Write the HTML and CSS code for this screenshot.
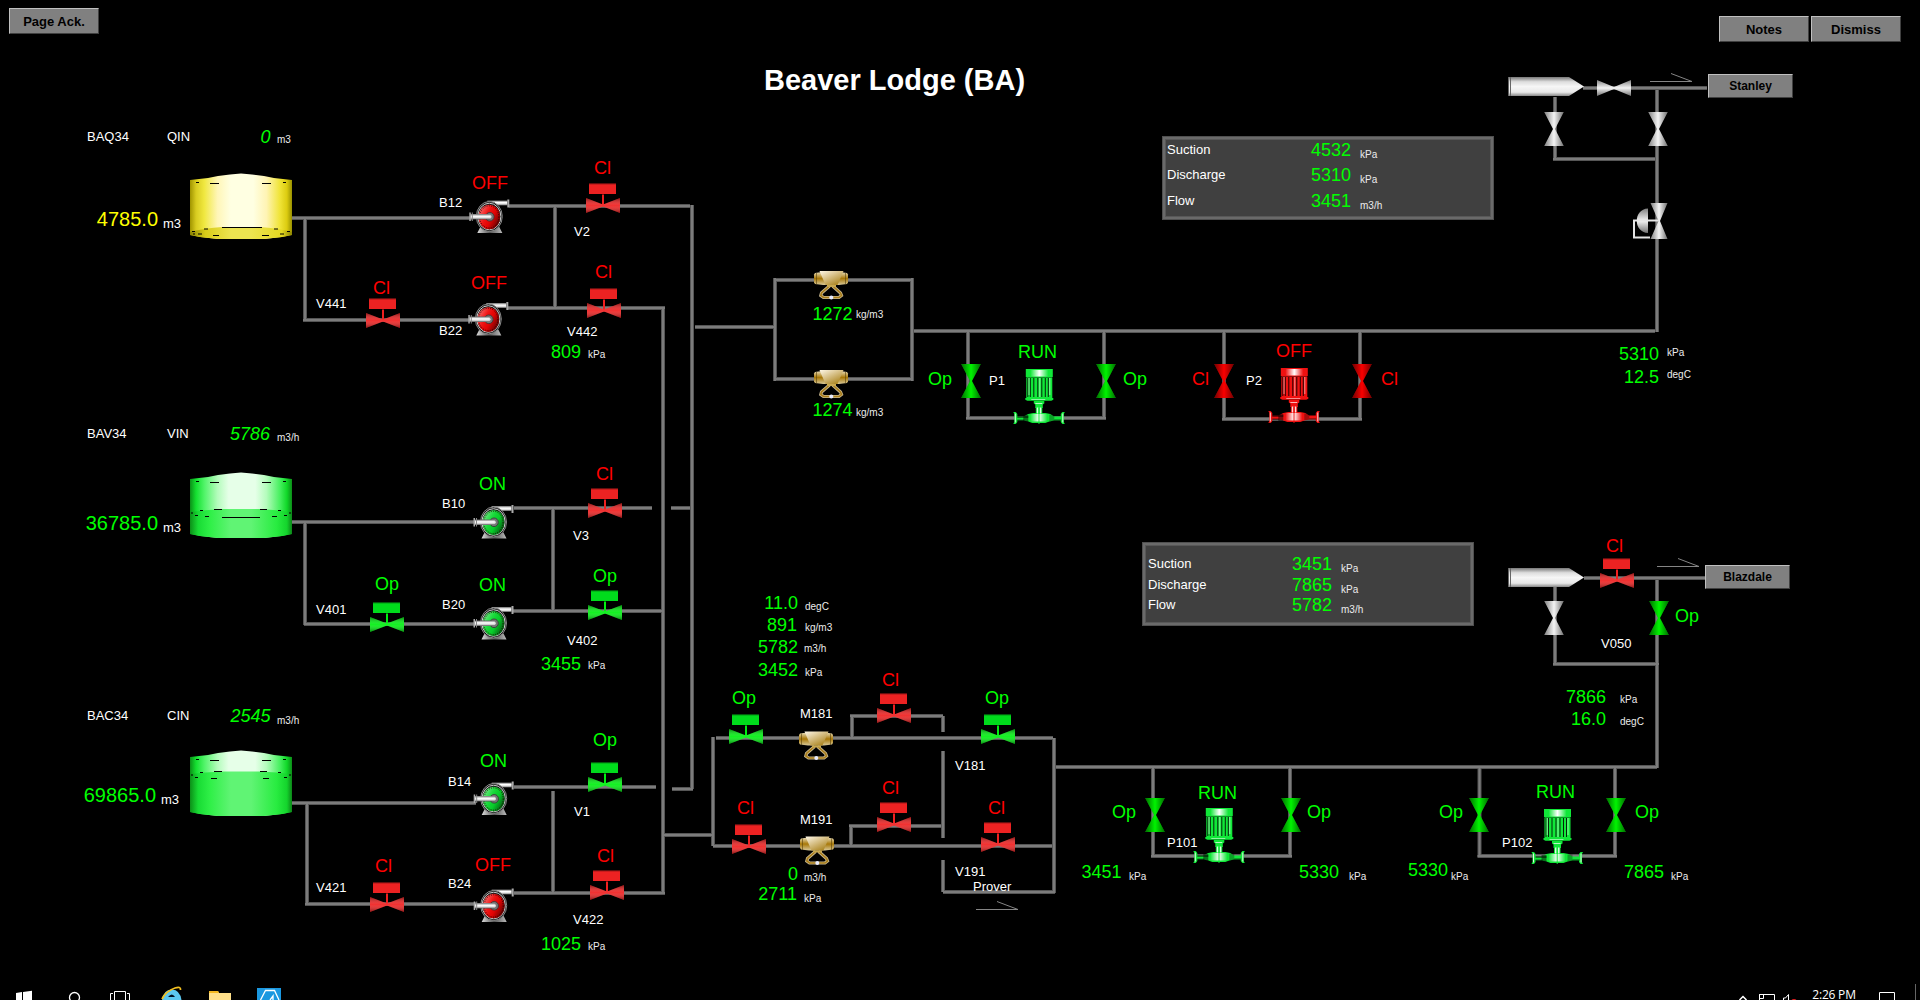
FILE: index.html
```html
<!DOCTYPE html>
<html lang="en">
<head>
<meta charset="utf-8">
<title>Beaver Lodge (BA)</title>
<link rel="stylesheet" href="styles.css">
</head>
<body>
<main class="canvas">
<svg class="diagram" width="1920" height="984" viewBox="0 0 1920 984">
<defs>
  <linearGradient id="steelV" x1="0" y1="0" x2="0" y2="1"><stop offset="0" stop-color="#6a6a6a"/><stop offset=".4" stop-color="#fff"/><stop offset=".7" stop-color="#ddd"/><stop offset="1" stop-color="#555"/></linearGradient>
  <linearGradient id="vesselV" x1="0" y1="0" x2="0" y2="1"><stop offset="0" stop-color="#777"/><stop offset=".25" stop-color="#ddd"/><stop offset=".5" stop-color="#f6f6f6"/><stop offset=".8" stop-color="#e8e8e8"/><stop offset="1" stop-color="#888"/></linearGradient>
  <linearGradient id="base" x1="0" x2="1"><stop offset="0" stop-color="#ddd"/><stop offset=".5" stop-color="#555"/><stop offset="1" stop-color="#bbb"/></linearGradient>
  <linearGradient id="shadeH"><stop offset="0" stop-color="#000" stop-opacity=".55"/><stop offset=".5" stop-color="#000" stop-opacity="0"/><stop offset="1" stop-color="#000" stop-opacity=".55"/></linearGradient>
  <linearGradient id="shadeV" x1="0" y1="0" x2="0" y2="1"><stop offset="0" stop-color="#000" stop-opacity=".45"/><stop offset=".5" stop-color="#fff" stop-opacity=".08"/><stop offset="1" stop-color="#000" stop-opacity=".45"/></linearGradient>
  <linearGradient id="greyH"><stop offset="0" stop-color="#808080"/><stop offset=".5" stop-color="#f4f4f4"/><stop offset="1" stop-color="#707070"/></linearGradient>
  <linearGradient id="greyV" x1="0" y1="0" x2="0" y2="1"><stop offset="0" stop-color="#808080"/><stop offset=".5" stop-color="#f4f4f4"/><stop offset="1" stop-color="#707070"/></linearGradient>
  <linearGradient id="rotor" x1="0" y1=".2" x2="1" y2=".8"><stop offset="0" stop-color="#fff" stop-opacity=".45"/><stop offset=".35" stop-color="#fff" stop-opacity=".08"/><stop offset=".6" stop-color="#000" stop-opacity=".05"/><stop offset="1" stop-color="#000" stop-opacity=".65"/></linearGradient>
  <linearGradient id="glint"><stop offset="0" stop-color="#fff" stop-opacity="0"/><stop offset=".5" stop-color="#fff"/><stop offset="1" stop-color="#fff" stop-opacity="0"/></linearGradient>
  <linearGradient id="goldCap" x1="0" y1="0" x2="0" y2="1"><stop offset="0" stop-color="#e8dcb8"/><stop offset=".5" stop-color="#a87808"/><stop offset="1" stop-color="#d8c898"/></linearGradient>
  <linearGradient id="goldBody" x1="0" y1="0" x2=".8" y2="1"><stop offset="0" stop-color="#fff8e8"/><stop offset=".5" stop-color="#d4bc80"/><stop offset="1" stop-color="#a88018"/></linearGradient>
  <linearGradient id="tankY"><stop offset="0" stop-color="#a09400"/><stop offset=".06" stop-color="#d8cc20"/><stop offset=".14" stop-color="#f0e840"/><stop offset=".27" stop-color="#fff6b8"/><stop offset=".4" stop-color="#ffffe2"/><stop offset=".62" stop-color="#ffffe2"/><stop offset=".75" stop-color="#fff4b4"/><stop offset=".88" stop-color="#f0e438"/><stop offset=".95" stop-color="#dccc10"/><stop offset="1" stop-color="#989000"/></linearGradient>
  <linearGradient id="liquidY"><stop offset="0" stop-color="#8c8400"/><stop offset=".15" stop-color="#d8cc18"/><stop offset=".4" stop-color="#ece450"/><stop offset=".6" stop-color="#ece450"/><stop offset=".9" stop-color="#e4d820"/><stop offset="1" stop-color="#8c8400"/></linearGradient>
  <linearGradient id="tankG"><stop offset="0" stop-color="#0c9018"/><stop offset=".06" stop-color="#14e030"/><stop offset=".14" stop-color="#50f468"/><stop offset=".27" stop-color="#b4fcbc"/><stop offset=".38" stop-color="#e6ffe8"/><stop offset=".64" stop-color="#e6ffe8"/><stop offset=".75" stop-color="#b4fcbc"/><stop offset=".88" stop-color="#48f060"/><stop offset=".95" stop-color="#10d828"/><stop offset="1" stop-color="#0c8c18"/></linearGradient>
  <linearGradient id="liquidG"><stop offset="0" stop-color="#0c9018"/><stop offset=".08" stop-color="#18dc34"/><stop offset=".2" stop-color="#30f048"/><stop offset=".4" stop-color="#60f474"/><stop offset=".6" stop-color="#60f474"/><stop offset=".85" stop-color="#28ec40"/><stop offset=".95" stop-color="#14d42c"/><stop offset="1" stop-color="#0c8418"/></linearGradient>

  <!-- motorised valve, origin at the centre of the body -->
  <g id="mov">
    <path d="M-1 -11h2v12h-2z" fill="currentColor"/>
    <path class="actuator" d="M-14 -22h27v10.500h-27z"/><path d="M-14 -21.500h27" stroke="#000" stroke-opacity=".3"/>
    <path d="M-17 -7.500L0 -1 17 -7.500V7.500L0 1 -17 7.500z" fill="currentColor"/>
    <path d="M-17 -7.500L0 -1 17 -7.500V7.500L0 1 -17 7.500z" fill="url(#shadeV)"/>
  </g>
  <!-- manual valve on a vertical pipe -->
  <g id="hv">
    <path d="M-9.800 -17H9.800L1 0 9.800 17H-9.800L-1 0z" fill="currentColor"/>
    <path d="M-9.800 -17H9.800L1 0 9.800 17H-9.800L-1 0z" fill="url(#shadeH)"/>
  </g>
  <path id="greyValve" d="M-9.800 -17H9.800L1 0 9.800 17H-9.800L-1 0z" fill="url(#greyH)"/>
  <!-- booster pump -->
  <g id="pump">
    <path d="M11 27h19l3 6H8z" fill="url(#base)"/>
    <path d="M18 .5h20v5H18z" fill="url(#steelV)"/><path d="M38 -.5h2v8h-2z" fill="#aaa"/>
    <ellipse cx="20" cy="16.500" rx="13" ry="15" fill="#111" stroke="#888"/>
    <ellipse cx="20" cy="16.500" rx="11.600" ry="13.300" fill="none" stroke="#ccc"/>
    <ellipse cx="20" cy="17" rx="10.700" ry="12.200" fill="currentColor"/>
    <ellipse cx="20" cy="17" rx="10.700" ry="12.200" fill="url(#rotor)"/>
    <ellipse cx="20" cy="17" rx="9.600" ry="11.200" fill="none" stroke="#200" stroke-width=".9" stroke-dasharray="1 1.300"/>
    <circle cx="20.500" cy="16.800" r="4.300" fill="#777" stroke="#333" stroke-width=".8"/><circle cx="20.500" cy="16.800" r="1.800" fill="#ddd"/>
    <path d="M1 14h20v5.500H1z" fill="url(#steelV)"/><path d="M0 12.500h1.500v8.500H0z" fill="#aaa"/><path d="M2.500 12.500h1v8.500h-1z" fill="#888"/>
  </g>
  <!-- vertical motor pump -->
  <g id="motor">
    <g fill="currentColor">
      <path d="M12.500 0h27v8h-27z"/><path d="M13 8h26v21H13z"/><path d="M12 29h28v1.800l-2 1H14l-2-1z"/>
      <path d="M20.500 32h10.500v2.500l-1.500 1v3.500h-7.500v-3.500l-1.500-1z"/><path d="M22.500 38h6.500v8h-6.500z"/>
      <path d="M3 47.500h7l5-2.500 5-1h12l5 1 4 2.500h7v4h-7l-5 1-4 1.500H19l-4-1.500-5-1H3z"/>
      <path d="M0 43h2.500l1.500 2v8l-1.500 2H0l1-2v-8zM51.500 43H49l-1.500 2v8l1.500 2h2.500l-1-2v-8z"/>
    </g>
    <path d="M17 1h18v6.500H17z" fill="url(#glint)"/>
    <path d="M14.500 9v19M17 9v19M20.500 9v19M24.500 9v19M28.500 9v19M32 9v19M35 9v19" stroke="#000" stroke-opacity=".85"/>
    <path d="M15.700 9v17M26.500 9v19M36.500 9v17" stroke="#fff" stroke-opacity=".6" stroke-width=".9"/>
    <path d="M12.500 8.500h27" stroke="#000" stroke-opacity=".35"/>
    <path d="M18 30.300h14v.8H18zM22 34h7v1h-7z" fill="#fff" fill-opacity=".7"/>
    <path d="M23.500 38.500h1.500v6h-1.500zM26.500 38.500h1.500v6h-1.500z" fill="#fff" fill-opacity=".85"/>
    <path d="M17 45h17v7.500H17z" fill="url(#glint)"/><path d="M25.700 39v16" stroke="currentColor"/>
    <path d="M4 47h11v2H4zM4 50.500h7v1.500H4z" fill="#000" fill-opacity=".5"/><path d="M10 46h5v7h-5z" fill="#000" fill-opacity=".5"/><path d="M36 45.500h5v6.500h-5zM41 50h7v2h-7z" fill="#000" fill-opacity=".3"/>
    <path d="M2 44.500v9M49.500 44.500v9" stroke="#fff" stroke-opacity=".85"/>
  </g>
  <!-- coriolis meter -->
  <g id="meter">
    <path d="M1 2.500q8 -1 8 -1h16q0 0 8 1l1 1.500v8l-1 1.500-8 1H9l-8-1-1-1.500V4z" fill="url(#goldCap)"/>
    <path d="M2.500 2.500v11.500M31.500 2.500v11.500" stroke="#554008" stroke-opacity=".6"/>
    <path d="M5.500 .5h24L23.500 14.500H11.500z" fill="url(#goldBody)"/>
    <path d="M15.500 15.500L7.500 22.500 6.800 25 9.500 27H25L27.500 25 26.500 22.500 18.700 15.500" fill="none" stroke="#c8b890" stroke-width="3.200"/>
    <path d="M15.500 15.500L7.500 22.500 6.800 25 9.500 27H25L27.500 25 26.500 22.500 18.700 15.500" fill="none" stroke="#a87c18" stroke-width="1.600"/>
    <path d="M13 15.500h9" stroke="#c8a850" stroke-width="2"/><circle cx="17.300" cy="27" r="2" fill="#e8ecff"/>
  </g>
  <!-- pig receiver vessel -->
  <g id="vessel"><path d="M0 0h61l15 9.500L61 19H0z" fill="url(#vesselV)"/><path d="M2.500 0v19M.5 0v19" stroke="#666"/></g>
  <path id="tankShape" d="M0 6L18 4 28 2 40 .5 51 -.5 62 .5 74 2 84 4 102 6V61L92 63 74 65H28L10 63 0 61z"/>
  <path id="roofDashes" class="dash" d="M20 9.500h9M72 9.500h9M6 8.500h3M93 8.500h3"/>
  <path id="flow" d="M0 8.500h42M21 .5L42 8.500" class="flow"/>

  <g id="pipes">
    <path d="M292 218H472M305 218V320M303 320H470M509 206H690M555 206V307M508 308H665M663 308V893M692 205V789M695 327H775"/>
    <path d="M292 522H475M305 522V625M304 624H474M514 508H652M671 508H690M553 508V611M513 611H664"/>
    <path d="M292 803H476M307 803V905M305 904H476M514 787H656M672 789H693M553 791V893M514 893H665M664 835H713"/>
    <path d="M775 278V381M775 280H912M912 278V381M775 379H912M914 331H1655M968 330V418M1104 330V418M966 418H1106M1224 331V419M1360 331V419M1222 419H1362M1657 90V332"/>
    <path d="M1583 88H1707M1555 97V160M1553 159H1655"/>
    <path d="M1584 578H1705M1555 587V665M1553 664H1659M1657 580V768M1056 767H1657M1153 767V856M1290 767V856M1151 856H1292M1479.500 767V856M1615 767V856M1477.500 856H1617"/>
    <path d="M713 737V846M716 738H1053M713 846H1052M1054 738V893M852 738V716M850 716H943M943 716V732M943 751V838M851 846V826M849 826H941M943 860V892M943 892H1055"/>
  </g>
</defs>

<use href="#pipes" class="pipe-edge"/>
<use href="#pipes" class="pipe-core"/>

<!-- storage tanks -->
<g transform="translate(190 174)">
  <use href="#tankShape" fill="url(#tankY)"/>
  <path d="M0 58Q15 54 32 53H70Q87 54 102 58V61L92 63 74 65H28L10 63 0 61z" fill="url(#liquidY)"/>
  <use href="#roofDashes"/><path class="dash" d="M32 53.500h40M14 55h4M84 55h4M2 57.500h3M97 57.500h3M8 60h4M90 60h4M23 61.500h6M72 61.500h7M3 60h2"/>
</g>
<g transform="translate(190 473)">
  <use href="#tankShape" fill="url(#tankG)"/>
  <path d="M0 39Q15 37 32 36H70Q87 37 102 39V61L92 63 74 65H28L10 63 0 61z" fill="url(#liquidG)"/>
  <use href="#roofDashes"/><path class="dash" d="M24 36.500h8M70 36.500h7M10 37.500h3M88 37.500h3M1 40h2M99 40h2M5 42.500h3M94 42.500h3M15 43.500h4M82 43.500h5M32 44.500h38"/>
</g>
<g transform="translate(190 751)">
  <use href="#tankShape" fill="url(#tankG)"/>
  <path d="M0 23Q15 21 32 20.500H70Q87 21 102 23V61L92 63 74 65H28L10 63 0 61z" fill="url(#liquidG)"/>
  <use href="#roofDashes"/><path class="dash" d="M24 20.500h8M70 20.500h7M10 21.500h3M88 21.500h3M1 24h2M99 24h2M5 26.500h3M94 26.500h3M21 27.500h6M73 27.500h6"/>
</g>

<g class="off">
  <use href="#pump" x="469.300" y="200"/><use href="#pump" x="468.300" y="302.500"/><use href="#pump" x="473.700" y="889"/>
</g>
<g class="on">
  <use href="#pump" x="473.500" y="505.500"/><use href="#pump" x="473.500" y="606.500"/><use href="#pump" x="473.700" y="782"/>
</g>

<g class="red">
  <use href="#mov" x="603" y="205.500"/><use href="#mov" x="604" y="310.500"/><use href="#mov" x="383" y="320.500"/><use href="#mov" x="605" y="510.500"/>
  <use href="#mov" x="387" y="904.500"/><use href="#mov" x="607" y="892.500"/><use href="#mov" x="749" y="846.500"/><use href="#mov" x="894" y="715.500"/>
  <use href="#mov" x="894" y="824.500"/><use href="#mov" x="998" y="844.500"/><use href="#mov" x="1617" y="580.500"/>
</g>
<g class="green">
  <use href="#mov" x="605" y="612.500"/><use href="#mov" x="387" y="624.500"/><use href="#mov" x="605" y="784.500"/><use href="#mov" x="746" y="736.500"/><use href="#mov" x="998" y="736.500"/>
</g>
<g class="hand-green">
  <use href="#hv" x="971" y="381"/><use href="#hv" x="1106" y="381"/><use href="#hv" x="1155" y="815"/><use href="#hv" x="1291" y="815"/>
  <use href="#hv" x="1479" y="815"/><use href="#hv" x="1616" y="815"/><use href="#hv" x="1659" y="618"/>
</g>
<g class="hand-red"><use href="#hv" x="1224" y="381"/><use href="#hv" x="1362" y="381"/></g>
<use href="#greyValve" x="1554" y="129"/><use href="#greyValve" x="1658" y="129"/><use href="#greyValve" x="1554" y="618"/>
<path d="M1597 80L1614 87 1631 80V96L1614 89 1597 96z" fill="url(#greyV)"/>

<!-- pressure control valve -->
<path d="M1650.500 203H1667.500L1660 221 1667.500 239H1650.500L1658.500 221z" fill="url(#greyH)"/>
<path d="M1648 208.500C1633 209 1633 232.500 1648 233z" fill="url(#greyV)"/>
<path d="M1659 220.500H1634V237.500H1650" fill="none" stroke="#e4e4e4" stroke-width="2"/>

<use href="#vessel" x="1508" y="77"/><use href="#vessel" x="1508" y="568"/>
<use href="#flow" x="1650" y="73"/><use href="#flow" x="1657" y="558"/><use href="#flow" x="976" y="901"/>
<use href="#meter" x="814" y="270.500"/><use href="#meter" x="814" y="369.500"/><use href="#meter" x="799" y="731"/><use href="#meter" x="800" y="836"/>
<g class="motor-green"><use href="#motor" x="1013.300" y="369"/><use href="#motor" x="1193.300" y="808"/><use href="#motor" x="1531.500" y="809"/></g>
<g class="motor-red"><use href="#motor" x="1268.300" y="368"/></g>

<g class="tag">
  <text x="87" y="141">BAQ34</text><text x="167" y="141">QIN</text><text x="439" y="207">B12</text><text x="574" y="236">V2</text>
  <text x="439" y="335">B22</text><text x="567" y="336">V442</text><text x="316" y="308">V441</text>
  <text x="87" y="438">BAV34</text><text x="167" y="438">VIN</text><text x="316" y="614">V401</text><text x="442" y="508">B10</text>
  <text x="573" y="540">V3</text><text x="442" y="609">B20</text><text x="567" y="645">V402</text>
  <text x="87" y="720">BAC34</text><text x="167" y="720">CIN</text><text x="316" y="892">V421</text><text x="448" y="786">B14</text>
  <text x="574" y="816">V1</text><text x="448" y="888">B24</text><text x="573" y="924">V422</text>
  <text x="800" y="718">M181</text><text x="800" y="824">M191</text><text x="955" y="770">V181</text><text x="955" y="876">V191</text><text x="973" y="891">Prover</text>
  <text x="989" y="385">P1</text><text x="1246" y="385">P2</text><text x="1167" y="847">P101</text><text x="1502" y="847">P102</text><text x="1601" y="648">V050</text>
  <text x="163" y="228">m3</text><text x="163" y="532">m3</text><text x="161" y="804">m3</text>
</g>

<g class="level"><text class="yellow" x="158" y="226">4785.0</text><text x="158" y="530">36785.0</text><text x="156" y="802">69865.0</text></g>
<g class="reading slanted"><text x="270.500" y="143">0</text><text x="270" y="440">5786</text><text x="270.500" y="722">2545</text></g>
<g class="reading">
  <text x="581" y="358">809</text><text x="581" y="670">3455</text><text x="581" y="950">1025</text>
  <text x="798" y="609">11.0</text><text x="797" y="631">891</text><text x="798" y="653">5782</text><text x="798" y="676">3452</text>
  <text x="798" y="880">0</text><text x="797" y="900">2711</text><text x="852.500" y="320">1272</text><text x="852.500" y="416">1274</text>
  <text x="1659" y="360">5310</text><text x="1659" y="383">12.5</text><text x="1606" y="703">7866</text><text x="1606" y="725">16.0</text>
  <text x="1121.500" y="878">3451</text><text x="1339" y="878">5330</text><text x="1448" y="876">5330</text><text x="1664" y="878">7865</text>
</g>

<g class="state">
  <text x="1018" y="358">RUN</text><text x="1198" y="799">RUN</text><text x="1536" y="798">RUN</text>
  <text x="479" y="490">ON</text><text x="479" y="591">ON</text><text x="480" y="767">ON</text>
  <text x="375" y="590">Op</text><text x="593" y="582">Op</text><text x="593" y="746">Op</text><text x="732" y="704">Op</text><text x="985" y="704">Op</text>
  <text x="928" y="385">Op</text><text x="1123" y="385">Op</text><text x="1675" y="622">Op</text><text x="1112" y="818">Op</text><text x="1307" y="818">Op</text><text x="1439" y="818">Op</text><text x="1635" y="818">Op</text>
</g>
<g class="state closed">
  <text x="472" y="189">OFF</text><text x="471" y="289">OFF</text><text x="475" y="871">OFF</text><text x="1276" y="357">OFF</text>
  <text x="594" y="174">Cl</text><text x="595" y="278">Cl</text><text x="373" y="294">Cl</text><text x="596" y="480">Cl</text><text x="375" y="872">Cl</text><text x="597" y="862">Cl</text>
  <text x="737" y="814">Cl</text><text x="882" y="686">Cl</text><text x="882" y="794">Cl</text><text x="988" y="814">Cl</text>
  <text x="1192" y="385">Cl</text><text x="1381" y="385">Cl</text><text x="1606" y="552">Cl</text>
</g>

<g class="unit">
  <text x="277" y="143">m3</text><text x="277" y="441">m3/h</text><text x="277" y="724">m3/h</text>
  <text x="588" y="358">kPa</text><text x="588" y="669">kPa</text><text x="588" y="950">kPa</text>
  <text x="805" y="610">degC</text><text x="805" y="631">kg/m3</text><text x="804" y="652">m3/h</text><text x="805" y="676">kPa</text><text x="804" y="881">m3/h</text><text x="804" y="902">kPa</text>
  <text x="856" y="318">kg/m3</text><text x="856" y="416">kg/m3</text><text x="1667" y="356">kPa</text><text x="1667" y="378">degC</text>
  <text x="1620" y="703">kPa</text><text x="1620" y="725">degC</text><text x="1129" y="880">kPa</text><text x="1349" y="880">kPa</text><text x="1451" y="880">kPa</text><text x="1671" y="880">kPa</text>
</g>
</svg>

<h1 class="title">Beaver Lodge (BA)</h1>
<button class="btn page-ack">Page Ack.</button>
<button class="btn notes">Notes</button>
<button class="btn dismiss">Dismiss</button>
<button class="btn link stanley">Stanley</button>
<button class="btn link blazdale">Blazdale</button>

<section class="panel panel-north">
  <div class="row"><span>Suction</span><b>4532</b><i>kPa</i></div>
  <div class="row"><span>Discharge</span><b>5310</b><i>kPa</i></div>
  <div class="row"><span>Flow</span><b>3451</b><i>m3/h</i></div>
</section>
<section class="panel panel-south">
  <div class="row"><span>Suction</span><b>3451</b><i>kPa</i></div>
  <div class="row"><span>Discharge</span><b>7865</b><i>kPa</i></div>
  <div class="row"><span>Flow</span><b>5782</b><i>m3/h</i></div>
</section>
</main>

<footer class="taskbar">
  <svg class="apps" width="300" height="16" viewBox="0 0 300 16">
    <path d="M16 9l6-1v8h-6zM23 8l9-1.200V16h-9z" fill="#fff"/>
    <circle cx="74.500" cy="13.500" r="5" fill="none" stroke="#fff" stroke-width="1.300"/>
    <path d="M114.500 16V7.500h11V16M110.500 16V9.500h2.500M129.500 16V9.500h-2.500" fill="none" stroke="#fff"/>
    <path d="M162 16q1-10 10-10.500Q180 6 181.500 16z" fill="#5cc8f0"/><path d="M168 13q4-5 7 0z" fill="#012"/>
    <path d="M162 15Q166 7 175 4q6-2 5.500 2" fill="none" stroke="#f4c020" stroke-width="1.800"/>
    <path d="M209 7h9l1 2h12v7h-22z" fill="#ffe08a"/><path d="M209 7h9l1 2h-10z" fill="#f4b820"/>
    <path d="M257 4h24v12h-24z" fill="#1b98e0"/><path d="M260.500 16l5-9.500h9l4.500 9.500M270 16l3-4v4" fill="none" stroke="#fff" stroke-width="1.300"/>
  </svg>
  <svg class="tray" width="80" height="16" viewBox="0 0 80 16">
    <path d="M8.500 16l3.500-3.500 3.500 3.500" fill="none" stroke="#fff" stroke-width="1.500"/>
    <path d="M28.500 16v-5.500h15V16M28.500 10.500h4v4h-4z" fill="none" stroke="#fff"/>
    <path d="M52.500 16v-2h2l3-3.500V16" fill="none" stroke="#fff"/><circle cx="63" cy="18" r="3" fill="#e02020"/>
  </svg>
  <span class="clock">2:26 PM</span>
  <svg class="notify" width="64" height="16" viewBox="0 0 64 16"><path d="M23.500 16V8.500h15V16" fill="none" stroke="#fff"/><path d="M59.500 0v16" stroke="#666"/></svg>
</footer>
</body>
</html>
```
FILE: styles.css
```css
body {
  margin: 0;
  width: 1920px;
  height: 1000px;
  overflow: hidden;
  background: #000;
  color: #fff;
  font-family: "Liberation Sans", Arial, sans-serif;
  display: flex;
  flex-direction: column;
}
.canvas { position: relative; height: 984px; }
.diagram { display: block; }

/* pipes */
.pipe-edge { fill: none; stroke: #565656; stroke-width: 4; }
.pipe-core { fill: none; stroke: #7c7c7c; stroke-width: 2; }
.dash { fill: none; stroke: #000; stroke-width: 1; }
.flow { fill: none; stroke: #858585; stroke-width: 1; }

/* equipment states */
.red { color: #f02020; --actuator: #ec2222; }
.green { color: #00f010; --actuator: #00dc1c; }
.actuator { fill: var(--actuator); }
.off { color: #f00404; }
.on { color: #08d82c; }
.hand-green { color: #00f400; }
.hand-red { color: #fa0000; }
.motor-green { color: #10e838; }
.motor-red { color: #f01010; }

/* labels */
.tag { font-size: 13px; fill: #fff; }
.level { font-size: 20px; fill: #0f0; text-anchor: end; }
.yellow { fill: #ff0; }
.reading { font-size: 18px; fill: #0f0; text-anchor: end; }
.slanted { font-style: italic; }
.state { font-size: 18px; fill: #0f0; }
.closed { fill: #f00; }
.unit { font-size: 10px; fill: #ececec; }

.title {
  position: absolute;
  left: 764px;
  top: 63px;
  margin: 0;
  font-size: 29px;
  line-height: 34px;
  font-weight: bold;
  white-space: nowrap;
}

/* buttons */
.btn {
  position: absolute;
  box-sizing: border-box;
  width: 90px;
  height: 26px;
  padding: 0;
  border: 1px solid;
  border-color: #c0c0c0 #404040 #404040 #c0c0c0;
  background: #808080;
  color: #000;
  font: bold 13px "Liberation Sans", Arial, sans-serif;
}
.page-ack { left: 9px; top: 8px; }
.notes { left: 1719px; top: 16px; }
.dismiss { left: 1811px; top: 16px; }
.link { width: 85px; height: 24px; font-size: 12px; }
.stanley { left: 1708px; top: 74px; }
.blazdale { left: 1705px; top: 565px; }

/* summary panels */
.panel {
  position: absolute;
  box-sizing: border-box;
  width: 332px;
  height: 84px;
  border: 1px solid #505050;
  background: #404040;
  box-shadow: inset 0 0 0 2px #6a6a6a, inset 0 0 0 3px #585858;
  display: grid;
  align-content: start;
}
.panel-north { left: 1162px; top: 136px; padding: 3px 0 0 4px; grid-template-rows: 25px 26px 24px; }
.panel-south { left: 1142px; top: 542px; padding: 11px 0 0 5px; grid-template-rows: 21px 20px 20px; }
.row {
  display: grid;
  grid-template-columns: 130px 54px 60px;
  align-items: start;
  line-height: 20px;
}
.row span { font-size: 13px; }
.row b { font-size: 18px; font-weight: normal; color: #0f0; text-align: right; }
.row i { font-size: 10px; font-style: normal; color: #ececec; padding: 5px 0 0 9px; }

/* taskbar */
.taskbar { height: 16px; display: flex; align-items: flex-start; }
.apps { flex: none; }
.tray { margin-left: 1431px; flex: none; }
.clock { width: 46px; padding-left: 1px; font: 12px/22px "Open Sans", sans-serif; text-align: center; letter-spacing: -0.2px; white-space: nowrap; }
.notify { margin-left: auto; flex: none; }
```
